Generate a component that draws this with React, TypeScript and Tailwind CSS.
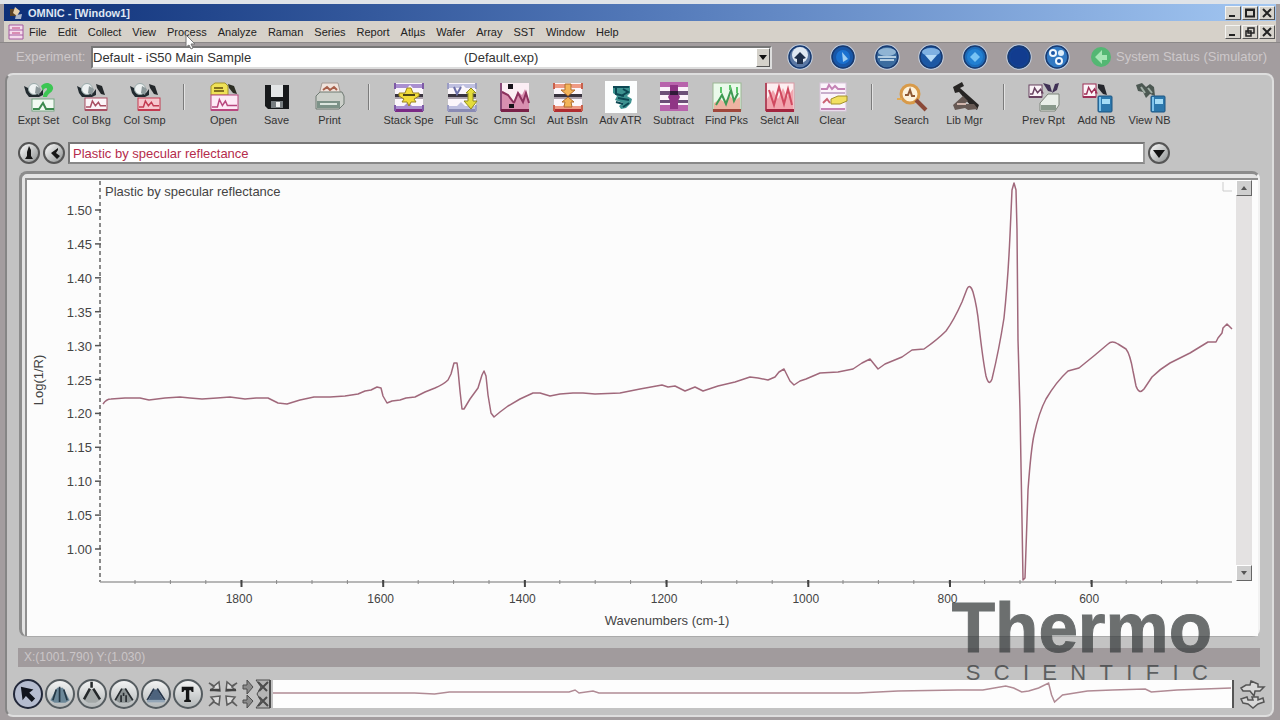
import { useState, type ReactNode } from 'react'

const MENUS = ['File', 'Edit', 'Collect', 'View', 'Process', 'Analyze', 'Raman', 'Series', 'Report', 'Atlµs', 'Wafer', 'Array', 'SST', 'Window', 'Help']

/* ---------- toolbar drawings, all on a 32x32 grid ---------- */

const Scope = () => (
  <g>
    <path d="M1 5l4 2 3 5h9l3-4v6l-4 2H6l-3-4z" fill="#222b30" />
    <circle cx="11" cy="8" r="5.5" fill="#eef2f2" stroke="#9aa" />
    <path d="M13 5l5 3-2 6-4-2z" fill="#8d999b" />
  </g>
)

const Tile = ({ x, y, w, h, line, fill = '#fbf4f8', edge }: { x: number; y: number; w: number; h: number; line: string; fill?: string; edge?: string }) => (
  <g>
    <rect x={x} y={y} width={w} height={h} fill={fill} stroke={edge ?? line} />
    <path
      d={`M${x + 1} ${y + h - 3}h${w * 0.2}l2 -${h * 0.5}l3 ${h * 0.4}l3 -${h * 0.3}l2 ${h * 0.3}H${x + w - 1}`}
      fill="none"
      stroke={line}
      strokeWidth="1.5"
    />
    <path d={`M${x} ${y + h}h${w}`} stroke={line} strokeWidth="2" />
  </g>
)

const Stacked = ({ line, soft, foot }: { line: string; soft: string; foot: string }) => (
  <g>
    <rect x="2" y="2" width="28" height="28" fill="#fbf6fb" />
    <path d="M2 3h28v4H20l-3-3-3 3H2z" fill={soft} />
    <path d="M2 13h28v3H2z" fill="#39343f" />
    <path d="M2 16h28v2H2z" fill="#a9a0ab" />
    <path d="M2 25h9l4-4 4 4h11v5H2z" fill={soft} />
    <path d="M2 28h28v3H2z" fill={foot} />
    <path d="M2 8V2M30 8V2M2 30v-6M30 30v-6" stroke={line} strokeWidth="2" />
  </g>
)

const Book = () => (
  <g>
    <rect x="17" y="15" width="14" height="16" rx="1" fill="#2c78ad" stroke="#1c5683" />
    <path d="M19 16v14" stroke="#7fc4ec" strokeWidth="2" />
    <rect x="21" y="18" width="8" height="5" fill="#a4dcf6" />
  </g>
)

type Tool = { label: string; art: ReactNode }

const GROUPS: Tool[][] = [
  [
    {
      label: 'Expt Set',
      art: (
        <>
          <Scope />
          <path d="M18 5c5-6 13-2 12 3-1 4-5 4-6 8h-4c0-5 4-6 4-8s-3-1-4 2z" fill="#3cc653" />
          <rect x="9" y="18" width="22" height="12" fill="#f3faf3" stroke="#76a783" />
          <path d="M10 28h6l4-6 3 6h8" fill="none" stroke="#3d8a4f" strokeWidth="2" />
        </>
      ),
    },
    {
      label: 'Col Bkg',
      art: (
        <>
          <Scope />
          <path d="M20 3l6 2 3 9-4-1-4-6z" fill="#23272a" />
          <Tile x={9} y={17} w={22} h={12} line="#a94f63" />
        </>
      ),
    },
    {
      label: 'Col Smp',
      art: (
        <>
          <Scope />
          <path d="M20 3l6 2 3 9-4-1-4-6z" fill="#23272a" />
          <Tile x={9} y={17} w={22} h={12} line="#c33a50" fill="#f6c6cd" />
        </>
      ),
    },
  ],
  [
    {
      label: 'Open',
      art: (
        <>
          <path d="M3 5l4-3h10l3 3v9H3z" fill="#efe258" stroke="#a5942a" />
          <path d="M6 7h9M6 10h10" stroke="#84711f" strokeWidth="2" />
          <path d="M20 3l6 2 3 8-4-1-4-5z" fill="#2c2e24" />
          <Tile x={3} y={14} w={27} h={15} line="#b9477f" fill="#fde9f6" />
        </>
      ),
    },
    {
      label: 'Save',
      art: (
        <>
          <path d="M4 4h24v24H7l-3-3z" fill="#17191b" />
          <rect x="10" y="4" width="12" height="12" fill="#e3e5e6" />
          <rect x="10" y="20" width="12" height="7" fill="#777d80" />
          <rect x="15" y="21" width="4" height="5" fill="#eee" />
        </>
      ),
    },
    {
      label: 'Print',
      art: (
        <>
          <path d="M8 2h16l3 12H5z" fill="#f0e3dc" stroke="#a39a94" />
          <path d="M9 9l4-3 3 3 4-3 3 3" fill="none" stroke="#a8604b" strokeWidth="2" />
          <path d="M2 15l4-4h22l2 4v8l-5 5H2z" fill="#ccd0ca" stroke="#6f7a73" />
          <path d="M3 20h23v7H3z" fill="#7c9288" />
          <path d="M6 23h17" stroke="#dce6df" strokeWidth="2" />
        </>
      ),
    },
  ],
  [
    {
      label: 'Stack Spe',
      art: (
        <>
          <Stacked line="#7e5aa6" soft="#a98fd0" foot="#7b2a86" />
          <path d="M14 7h4l2 5h6v3l-5 3 2 3h-5l-2 4-2-4H9l2-3-5-3v-3h6z" fill="#f2dc3a" stroke="#9a8520" />
          <path d="M10 14h12" stroke="#4c4416" strokeWidth="2" />
        </>
      ),
    },
    {
      label: 'Full Sc',
      art: (
        <>
          <Stacked line="#9b9dc4" soft="#bfc0e0" foot="#8a8bb4" />
          <path d="M8 6l3 7 4-7" fill="none" stroke="#6d70a8" strokeWidth="2" />
          <path d="M25 7l5 5h-3v8h4l-6 8-7-8h4v-8h-2z" fill="#e4dc3a" stroke="#8f8a22" />
        </>
      ),
    },
    {
      label: 'Cmn Scl',
      art: (
        <>
          <rect x="2" y="2" width="28" height="28" fill="#fbeef4" />
          <path d="M2 9l6 4 6 8 5-10 4 3 3-6 4 12v10H2z" fill="#d98fb0" />
          <path d="M3 11l6 3 6 8M15 22l4-10 5 9 3-9 3 10" fill="none" stroke="#8c315e" strokeWidth="2" />
          <path d="M2 2v28" stroke="#8a4a78" strokeWidth="2" />
          <path d="M2 28h28v3H2z" fill="#7a2048" />
          <path d="M9 3h5v5H9zM10 23h5v4h-5z" fill="#17131a" />
        </>
      ),
    },
    {
      label: 'Aut Bsln',
      art: (
        <>
          <Stacked line="#c8604c" soft="#ee9a84" foot="#b02d30" />
          <path d="M13 3h6v6h4l-7 6-7-6h4zM12 26l1-5h-3l6-5 6 5h-3l1 5z" fill="#f3b458" stroke="#b06c2e" />
        </>
      ),
    },
    {
      label: 'Adv ATR',
      art: (
        <>
          <rect width="32" height="32" fill="#fcfefe" />
          <path d="M8 5h17v7l-3 3 5 3-1 4-5 5-5 1-2-3 4-3-8-3 2-4-4-3z" fill="#3d9290" />
          <path d="M8 6h16M11 7v6l8 2M18 8l5 3-7 4M13 17l11 2M11 21l7 2M18 26l6-4" stroke="#0c4853" strokeWidth="2" fill="none" />
        </>
      ),
    },
    {
      label: 'Subtract',
      art: (
        <>
          <rect x="2" y="2" width="28" height="28" fill="#fbf2fa" />
          <path d="M2 1h28v5H2zM2 24h28v6H2z" fill="#b863ac" />
          <path d="M2 10h28v4H2zM2 19h28v3H2z" fill="#6d5078" />
          <path d="M12 4h8v8l2 4-2 4v8h-8v-8l-2-4 2-4z" fill="#8f3585" />
          <path d="M12 10h8v4h-8z" fill="#2f1938" />
        </>
      ),
    },
    {
      label: 'Find Pks',
      art: (
        <>
          <rect x="2" y="2" width="28" height="27" fill="#eafaea" stroke="#9bb894" />
          <path d="M3 22l6-4 4 3 6-6 4 5 6-4v12H3z" fill="#eeb3a2" />
          <path d="M5 24l6-10 4 9 5-14 3 11 4-8" fill="none" stroke="#3f9a53" strokeWidth="2" />
          <path d="M10 6v6M19 4v5M26 6v6" stroke="#5cc56a" strokeWidth="2" />
          <path d="M2 28h28v3H2z" fill="#a0473c" />
        </>
      ),
    },
    {
      label: 'Selct All',
      art: (
        <>
          <rect x="2" y="2" width="28" height="28" fill="#fdeef0" stroke="#dc9aa5" />
          <path d="M3 18l6-9 5 9 5-11 4 9 6-8v21H3z" fill="#f2a5ae" />
          <path d="M5 9l5 15 5-18 5 17 4-15 4 16" fill="none" stroke="#d04a60" strokeWidth="2" />
          <path d="M2 2v28" stroke="#b2475d" strokeWidth="2" />
          <path d="M2 28h28v3H2z" fill="#a32640" />
        </>
      ),
    },
    {
      label: 'Clear',
      art: (
        <>
          <rect x="3" y="2" width="26" height="28" fill="#fbf4fb" stroke="#d9c6dc" />
          <path d="M4 8h6l2-4 3 4 3-3 3 3h7M4 28h24" stroke="#c583b6" strokeWidth="2" fill="none" />
          <path d="M4 12h24" stroke="#c8aecd" strokeWidth="2" />
          <path d="M6 22l4-4 3 4" stroke="#cb6374" strokeWidth="2" fill="none" />
          <path d="M14 18l7-3h9v5l-7 3h-9z" fill="#f2e061" stroke="#a1902e" />
        </>
      ),
    },
  ],
  [
    {
      label: 'Search',
      art: (
        <>
          <circle cx="14" cy="13" r="9" fill="#fdf2dc" stroke="#d89a49" strokeWidth="3" />
          <path d="M9 14h3l2-5 2 6h3" stroke="#8f5934" fill="none" strokeWidth="2" />
          <path d="M20 19l10 10" stroke="#8b4938" strokeWidth="4" />
          <path d="M1 18h5" stroke="#e4aa52" strokeWidth="2" />
        </>
      ),
    },
    {
      label: 'Lib Mgr',
      art: (
        <>
          <path d="M4 6l9-5 2 4-4 2 19 17-2 5-6-4-12-14-4 1z" fill="#272524" />
          <path d="M4 24l10-9 5 5-4 3h10l4 5-10 1-3-2-10 2z" fill="#665954" />
          <path d="M8 23h9" stroke="#d0b5ac" strokeWidth="2" />
        </>
      ),
    },
  ],
  [
    {
      label: 'Prev Rpt',
      art: (
        <>
          <Tile x={1} y={4} w={13} h={12} line="#694260" />
          <path d="M15 2l7 2 2 7-4-1zM31 2l-4 1-3 9 5-3z" fill="#403155" />
          <path d="M12 22l8-9h11v11l-4 6H12z" fill="#e9eee8" stroke="#7d857a" />
          <path d="M13 24h15v5H13z" fill="#89998b" />
        </>
      ),
    },
    { label: 'Add NB', art: <><Tile x={2} y={3} w={13} h={13} line="#9f2f56" /><path d="M17 3l6 1 3 10-4-1-5-6z" fill="#25262c" /><Book /></> },
    { label: 'View NB', art: <><path d="M2 4l6-2 4 4 4-3 4 3 1 9-5-2-4 4-3-6-5-1z" fill="#4c5852" /><path d="M7 6l4 6M14 7l4 5" stroke="#a1afa6" strokeWidth="2" /><Book /></> },
  ],
]

const Separator = () => (
  <div className="flex w-[26px] shrink-0 justify-center pt-[3px]">
    <div className="h-[26px] w-[2px] border-r border-[#e2e2e2] bg-[#7b7b7b]" />
  </div>
)

/* ---------- round status buttons in the experiment row ---------- */

const SPHERES: { name: string; tone: string; art: ReactNode; gap: string }[] = [
  { name: 'Home', tone: '#5a77a3', gap: 'mr-[17px]', art: <><circle cx="13" cy="11" r="8" fill="#dfe8f2" /><path d="M13 8l6 6-3 1v5h-6v-5l-3-1z" fill="#1e2f4b" /></> },
  { name: 'Collect', tone: '#1857a8', gap: 'mr-[18px]', art: <><circle cx="13" cy="13" r="7" fill="#1a71d0" /><path d="M12 8l6 7-5 3z" fill="#9ccdf3" /></> },
  { name: 'Instrument', tone: '#3b6c9f', gap: 'mr-[18px]', art: <><ellipse cx="13" cy="8" rx="9" ry="4" fill="#8fb4d4" /><path d="M4 13h18M6 16h14" stroke="#b2cde2" strokeWidth="2" /></> },
  { name: 'Down', tone: '#1c58a4', gap: 'mr-[18px]', art: <><ellipse cx="13" cy="8" rx="9" ry="4" fill="#7fb1e2" /><path d="M7 11h12l-6 7z" fill="#b5daf6" /></> },
  { name: 'Sample', tone: '#1c6bb9', gap: 'mr-[18px]', art: <><circle cx="13" cy="13" r="8" fill="#2280d2" /><path d="M13 8l5 5-5 5-5-5z" fill="#78c3f4" /></> },
  { name: 'Stop', tone: '#123f91', gap: 'mr-[12px]', art: <circle cx="13" cy="13" r="8" fill="#123c8f" /> },
  { name: 'Tools', tone: '#3279c2', gap: 'mr-[20px]', art: <><circle cx="9" cy="9" r="4" fill="#f0f7fd" /><circle cx="17" cy="9" r="3" fill="#dcedfa" /><circle cx="15" cy="17" r="4" fill="#f0f7fd" /><circle cx="9" cy="9" r="2" fill="#1a56a4" /><circle cx="15" cy="17" r="2" fill="#1a56a4" /></> },
]

const PALETTE: { name: string; art: ReactNode }[] = [
  { name: 'Selection tool', art: <path d="M7 7l15 3-5 4 7 7-4 4-7-7-4 5z" fill="#10131c" /> },
  { name: 'Region tool', art: <><path d="M4 23L12 8h7l8 15-5 3H9z" fill="#6b8798" /><path d="M15 7v18M11 10L7 23M20 10l4 13" stroke="#243745" strokeWidth="2" /></> },
  { name: 'Cursor tool', art: <><path d="M6 23l7-13h5l7 13-5 3h-9z" fill="#a3a8a8" /><path d="M15 1v7M13 9L6 22M17 9l8 13" stroke="#24282a" strokeWidth="3" /></> },
  { name: 'Peak height tool', art: <><path d="M5 23L13 9h5l8 14-5 3H10z" fill="#8c9394" /><path d="M13 9L5 23M17 9l9 14M12 17v8M18 17v8M15 14v4" stroke="#272c30" strokeWidth="2" /></> },
  { name: 'Peak area tool', art: <><path d="M6 24l7-14h4l8 14z" fill="#4d637d" /><path d="M13 9L5 23M17 9l9 14" stroke="#26364b" strokeWidth="2" /><path d="M5 24h21" stroke="#93a5b6" strokeWidth="3" /></> },
  { name: 'Annotation tool', art: <path d="M8 7h14v6h-2l-1-2h-2v11l2 1v2h-8v-2l2-1V11h-2l-1 2H8z" fill="#141516" /> },
]

/* ---------- spectrum data ---------- */

const SPECTRUM =
  'M103 404C105 401 107 399 111 399L125 398L140 398L149 400L165 398L180 397L190 398L202 399L217 398L230 397L245 399L256 398L268 398L278 403L287 404L300 400L314 397L330 397L345 396L358 394L365 391L371 390L377 387L381 388L383 396L387 403L392 401L400 400L406 398L415 397L425 392L435 388Q444 384 448 380L451 374L454 363L457 363L458 370L460 391L462 409L464 409L470 399L478 388L482 375L484 371L486 376L488 395L491 413L494 417L500 412L508 406L520 399L533 393L540 393L550 396L560 394L573 393L583 393L595 394L620 393L630 391L640 389L662 385L668 387L675 386L685 391L695 387L703 391L718 386L735 382L750 377L758 378L768 380L775 377L779 372L784 369L790 381L794 385L800 381L806 379L820 373L838 372L853 369L862 363L870 359L878 369L885 364L902 357L912 350L924 349Q937 340 946 331Q954 320 962 302L967 289Q970 283 973 292Q977 306 979 326Q983 361 986 376Q989 387 992 379Q999 350 1004 318Q1008 280 1010 235L1012 190L1014 183L1016 190L1017 230L1018 340L1020 410L1022 520L1023 580L1025 578L1028 490Q1031 449 1034 435Q1039 412 1046 399Q1056 382 1068 371L1079 368L1095 355L1108 344Q1112 340 1118 344L1126 349Q1130 354 1133 371L1136 386Q1139 395 1144 389L1152 377Q1160 369 1170 363L1190 353L1208 342L1216 342L1218 338L1222 333L1223 328L1227 324L1232 329'

const Y_TICKS = ['1.50', '1.45', '1.40', '1.35', '1.30', '1.25', '1.20', '1.15', '1.10', '1.05', '1.00']
const X_TICKS = ['1800', '1600', '1400', '1200', '1000', '800', '600']

function SpectrumPlot() {
  return (
    <svg
      viewBox="27 181 1209 454"
      className="h-full min-h-0 w-full"
      role="img"
      aria-label="Spectrum plot"
      fontFamily='"Liberation Sans", sans-serif'
      fontSize="13"
      fill="#444"
    >
      <path d="M100 181V582" stroke="#8a8a8a" strokeWidth="2" strokeDasharray="4 3" />
      <path d="M100 582H1232" stroke="#a0a0a0" strokeWidth="1.5" />
      {Y_TICKS.map((t, i) => (
        <g key={t}>
          <path d={`M95 ${210 + i * 33.9}h6`} stroke="#555" strokeWidth="1.5" />
          <text x="92" y={215 + i * 33.9} textAnchor="end">{t}</text>
        </g>
      ))}
      {Array.from({ length: 31 }, (_, i) => (
        <path key={i} d={`M${135 + i * 35.4} 580v4`} stroke="#888" />
      ))}
      {X_TICKS.map((t, i) => (
        <g key={t}>
          <path d={`M${241.5 + i * 141.7} 580v7`} stroke="#444" strokeWidth="2" />
          <text x={239 + i * 141.7} y="603" textAnchor="middle" fontSize="12">{t}</text>
        </g>
      ))}
      <text x="105" y="196">Plastic by specular reflectance</text>
      <text x="667" y="625" textAnchor="middle">Wavenumbers (cm-1)</text>
      <text transform="translate(43 380) rotate(-90)" textAnchor="middle">Log(1/R)</text>
      <path d={SPECTRUM} fill="none" stroke="#a0687b" strokeWidth="1.5" strokeLinejoin="round" />
      <path d="M1223 182v9h9" fill="none" stroke="#ccc" />
    </svg>
  )
}

const WindowButtons = ({ restore = false }: { restore?: boolean }) => (
  <div className="flex gap-px">
    {['Minimize', restore ? 'Restore' : 'Maximize', 'Close'].map(name => (
      <button key={name} aria-label={name} className="h-[14px] w-4 border border-[#f4f4f2] border-r-[#555] border-b-[#555] bg-[#d6d3cc]">
        <svg viewBox="0 0 14 12" className="h-full w-full" fill="none" stroke="#222" strokeWidth="2">
          {name === 'Minimize' && <path d="M3 9h6" />}
          {name === 'Maximize' && <path d="M3 2.5h8v7H3zM3 3h8" />}
          {name === 'Restore' && <path d="M5 2h6v5H5zM3 5h5v5H3z" strokeWidth="1.5" />}
          {name === 'Close' && <path d="M3 2l8 8M11 2l-8 8" />}
        </svg>
      </button>
    ))}
  </div>
)

const RoundButton = ({ name, children }: { name: string; children: ReactNode }) => (
  <button aria-label={name} className="h-[22px] w-[22px] shrink-0 rounded-full border-2 border-[#555] bg-linear-to-br from-white to-[#8f9292]">
    <svg viewBox="0 0 18 18" className="h-full w-full">{children}</svg>
  </button>
)

export default function App() {
  const [title, setTitle] = useState('Plastic by specular reflectance')

  return (
    <div className="relative flex min-h-screen flex-col border-t-4 border-[#dfe3e8] bg-[#a39d9f] font-['Liberation_Sans',sans-serif] text-[#333]">
      {/* Title bar */}
      <header className="mx-1 flex h-[17px] items-center bg-linear-to-r from-[#0d2f78] via-[#5278b8] to-[#a3c7f2] pr-px pl-1">
        <svg viewBox="0 0 16 16" className="mr-1 h-4 w-4">
          <path d="M2 4h6v7H2z" fill="#5c4326" />
          <path d="M7 2l5 4-3 5-4-3z" fill="#e7cfaa" />
          <path d="M8 10l6-1-1 5H7z" fill="#a9b4c9" />
        </svg>
        <h1 className="flex-1 text-[11px] leading-4 font-bold text-[#dfe6f2]">OMNIC - [Window1]</h1>
        <WindowButtons />
      </header>

      {/* Menu bar */}
      <nav className="mx-1 flex h-[21px] items-center bg-[#d6d1c9] pr-px pl-1">
        <svg viewBox="0 0 16 16" className="mr-[5px] h-4 w-4" fill="#f5dcec" stroke="#a45aa0">
          <path d="M1 1h14v14H1zM1 6h14M1 11h14" />
          <path d="M4 9h8M4 4h8" stroke="#c0407d" />
        </svg>
        <div className="flex flex-1 gap-[11px] text-[11px] leading-4 text-[#222]">
          {MENUS.map(m => (
            <button key={m}>{m}</button>
          ))}
        </div>
        <WindowButtons restore />
      </nav>

      {/* Experiment row */}
      <div className="flex h-[31px] items-center border-t border-[#8b8888] pr-2 pb-[2px] pl-4">
        <label htmlFor="experiment" className="w-[75px] text-[13px] text-[#cdc8ca]">Experiment:</label>
        <div className="relative min-w-0 flex-1">
          <select id="experiment" className="block h-[23px] w-full appearance-none border-2 border-[#777] border-r-[#ddd] border-b-[#ddd] bg-white text-[13px] text-[#333]">
            <option>Default - iS50 Main Sample</option>
          </select>
          <span className="pointer-events-none absolute top-[2px] left-[373px] text-[13px] leading-5">(Default.exp)</span>
          <span className="pointer-events-none absolute top-[2px] right-[2px] flex h-[19px] w-[14px] items-center justify-center border border-white border-r-[#555] border-b-[#555] bg-[#d4d1ca]">
            <svg viewBox="0 0 8 5" className="h-[5px] w-2"><path d="M0 0h8L4 5z" fill="#111" /></svg>
          </span>
        </div>
        <div className="ml-[15px] flex items-center">
          {SPHERES.map(s => (
            <button key={s.name} aria-label={s.name} className={`h-[26px] w-[26px] ${s.gap}`}>
              <svg viewBox="0 0 26 26" className="h-full w-full">
                <circle cx="13" cy="13" r="12" fill={s.tone} stroke="#c3cfdf" strokeWidth="1.5" />
                <circle cx="13" cy="13" r="11" fill="none" stroke="#183a70" strokeWidth="1.5" />
                {s.art}
              </svg>
            </button>
          ))}
          <svg viewBox="0 0 22 22" className="h-[22px] w-[22px]">
            <circle cx="11" cy="11" r="10" fill="#54b773" />
            <path d="M5 11l7-7v5h5v5h-5v4z" fill="#a6e5b5" />
          </svg>
        </div>
        <span className="ml-1 w-[156px] text-[13px] whitespace-nowrap text-[#cdc8ca]">System Status (Simulator)</span>
      </div>

      {/* Work panel */}
      <main className="mr-[6px] mb-[3px] ml-[5px] flex flex-1 flex-col rounded-lg border-2 border-[#dedede] border-l-[#858585] bg-[#c3c3c3]">
        <div className="flex overflow-hidden pt-[6px] pl-[5px]">
          {GROUPS.map((group, gi) => (
            <div key={gi} className="flex shrink-0">
              {gi > 0 && <Separator />}
              {group.map(t => (
                <button key={t.label} className="flex w-[53px] flex-col items-center text-[11px] leading-[14px] whitespace-nowrap text-[#333]">
                  <svg viewBox="0 0 32 32" className="h-8 w-8">{t.art}</svg>
                  {t.label}
                </button>
              ))}
            </div>
          ))}
        </div>

        <div className="mt-[15px] flex items-center gap-[3px] pr-[102px] pl-[11px]">
          <RoundButton name="Spectrum information">
            <path d="M9 2l2 4v6l2 3H5l2-3V8z" fill="#151515" />
          </RoundButton>
          <RoundButton name="Previous spectrum">
            <path d="M6 9l7-5v2l-2 3 4 3-3 3z" fill="#151515" />
          </RoundButton>
          <input
            aria-label="Spectrum title"
            value={title}
            onChange={e => setTitle(e.target.value)}
            className="h-[22px] min-w-0 flex-1 border-2 border-[#777] border-r-[#999] border-b-[#888] bg-white px-[3px] text-[13px] text-[#b52c4c]"
          />
          <RoundButton name="Spectrum list">
            <path d="M3 6h12l-6 8z" fill="#111" />
          </RoundButton>
        </div>

        {/* Spectral window */}
        <section className="mt-[7px] mr-[12px] ml-[12px] flex min-h-0 flex-1 basis-0 flex-col rounded-lg border-t-[3px] border-r-2 border-b border-l-[3px] border-[#8c8c8c] border-r-[#f2f2f2] border-b-[#aaa] bg-[#e4e4e4] pt-1 pl-[3px]">
          <div className="flex min-h-0 flex-1 basis-0 border-t-2 border-l-2 border-[#909090] bg-[#fcfcfc]">
            <div className="min-h-0 min-w-0 flex-1">
              <SpectrumPlot />
            </div>
            <div className="mr-[6px] mb-[55px] flex w-4 flex-col justify-between bg-[#e4e2e2]">
              {['Scroll up', 'Scroll down'].map((name, i) => (
                <button key={name} aria-label={name} className="h-4 w-4 border border-white border-r-[#666] border-b-[#666] bg-[#cfcfcf]">
                  <svg viewBox="0 0 14 14" className="h-full w-full">
                    <path d={i ? 'M4 5h6l-3 4z' : 'M4 9h6L7 5z'} fill="#555" />
                  </svg>
                </button>
              ))}
            </div>
          </div>
        </section>

        <p className="mt-[11px] mr-[12px] ml-[11px] bg-[#a19b9d] px-[6px] text-[12px] leading-[19px] text-[#cbc6c8]">X:(1001.790) Y:(1.030)</p>

        {/* Tool palette and overview */}
        <div className="mt-3 mb-[6px] flex h-[30px] items-center pr-1 pl-[6px]">
          <div className="flex gap-[2px]">
            {PALETTE.map((p, i) => (
              <button
                key={p.name}
                aria-label={p.name}
                className={`h-[30px] w-[30px] rounded-full border-2 ${i === 0 ? 'border-[#22283a] bg-[#b5bccf]' : 'border-[#555c60] bg-linear-to-b from-[#f2f3f3] to-[#b4b8b9]'}`}
              >
                <svg viewBox="0 0 31 31" className="h-full w-full">{p.art}</svg>
              </button>
            ))}
          </div>
          <div className="flex gap-1 pr-px pl-[5px]">
            <button aria-label="Compress">
              <svg viewBox="0 0 30 30" className="h-[30px] w-[30px]" fill="#dcdcdc" stroke="#5c5c5c" strokeWidth="1.5">
                <path d="M1 4l5 3 5-4 1 9-9-1 3-3zM29 4l-5 3-5-4-1 9 9-1-3-3z" />
                <path d="M1 27l5-4 5 3 1-9-9 1 3 4zM29 27l-5-4-5 3-1-9 9 1-3 4z" />
                <path d="M2 11h10M18 11h10" stroke="#444" strokeWidth="2.5" />
              </svg>
            </button>
            <button aria-label="Expand">
              <svg viewBox="0 0 30 30" className="h-[30px] w-[30px]" fill="#8b8b8b" stroke="#4c4c4c">
                <path d="M1 6h4V1l6 7-6 7v-5H1zM1 21h4v-5l6 6-6 7v-5H1z" />
                <path d="M14 1h14v28H14l5-7-4-7 4-7z" fill="#b4b4b4" />
                <path d="M16 3l9 9M26 3l-9 9M16 27l9-9M26 27l-9-9" strokeWidth="2" />
                <path d="M28 1v28" strokeWidth="2" />
              </svg>
            </button>
          </div>
          <svg viewBox="273 680 962 28" preserveAspectRatio="none" className="h-[28px] min-w-0 flex-1 border-r-2 border-[#555] bg-[#fdfdfd]">
            <path
              d="M273 693H415L435 694L450 692H570L576 690L580 693L594 691L600 693H860L900 691L960 690L985 690L1008 686L1016 688L1024 692L1031 691L1041 688L1051 683L1054 695L1057 702L1065 695L1090 691L1115 690L1148 689L1154 692L1180 690L1234 688"
              fill="none"
              stroke="#b08a94"
              strokeWidth="1.5"
            />
          </svg>
          <button aria-label="Full scale" className="ml-1">
            <svg viewBox="0 0 30 30" className="h-[30px] w-[30px]" fill="#d8d8d8" stroke="#555" strokeWidth="1.5">
              <path d="M13 2l7 3v3h6l-4 4h-5l-1 5-4-5H5l-2-3 5-3h4z" />
              <path d="M3 20l6-2 1 3h5l-1-3h6v3l5-2 1 4-6 2-5 4-5-4-5-1z" />
            </svg>
          </button>
        </div>
      </main>

      {/* Brand mark over the lower right corner */}
      <div className="pointer-events-none absolute right-[68px] bottom-[37px] opacity-75">
        <div className="mb-1 text-[71px] leading-[62px] font-bold text-[#3c4041] [-webkit-text-stroke:1px_#3c4041]">Thermo</div>
        <div className="flex justify-between pr-1 pl-[14px] text-[22px] leading-5 text-[#3c4041]">
          {'SCIENTIFIC'.split('').map((c, i) => (
            <span key={i}>{c}</span>
          ))}
        </div>
      </div>

      {/* Mouse pointer */}
      <svg viewBox="0 0 14 20" className="pointer-events-none absolute top-[30px] left-[185px] h-5 w-[14px]">
        <path d="M1 1v12l3-2 2 4 2-1-2-4h4z" fill="#fff" stroke="#777" />
      </svg>
    </div>
  )
}
